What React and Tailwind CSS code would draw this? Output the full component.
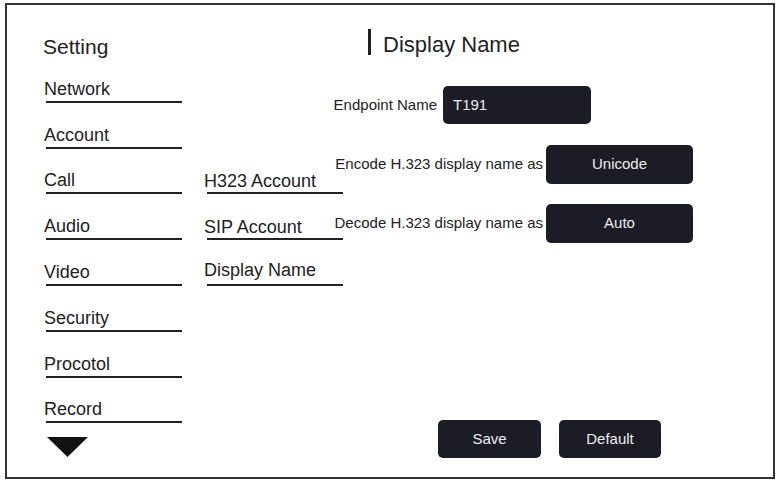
const menu = ['Network', 'Account', 'Call', 'Audio', 'Video', 'Security', 'Procotol', 'Record'];
const subMenu = ['H323 Account', 'SIP Account', 'Display Name'];

function MenuRow({ label }) {
  return (
    <div className="h-[45.8px] w-[136px] shrink-0 flex items-end border-b-2 border-[#222]">
      <span className="text-[18px] leading-[20px] pb-[2px] -ml-[2px] text-[#222]">{label}</span>
    </div>
  );
}

function SubRow({ label, last }) {
  return (
    <div className="h-[45.8px] w-[136px] ml-[3px] shrink-0 flex items-end border-b-2 border-[#222]">
      <span className={`text-[18px] leading-[20px] -ml-[3px] text-[#222] whitespace-nowrap ${last ? 'pb-[4px]' : 'pb-[1px]'}`}>
        {label}
      </span>
    </div>
  );
}

function DarkBox({ children, className = '' }) {
  return (
    <div className={`bg-[#1c1c26] rounded-[5px] text-[#ececec] text-[15px] flex items-center shrink-0 ${className}`}>
      {children}
    </div>
  );
}

export default function App() {
  return (
    <div className="w-[781px] h-[487px] bg-white overflow-hidden font-['Liberation_Sans',Arial,sans-serif]">
      <div className="ml-[5px] mt-[3px] w-[770px] h-[476px] border-2 border-[#333] flex">
        {/* Main menu */}
        <div className="pl-[39px] pt-[30px] w-[175px] shrink-0 flex flex-col">
          <div className="h-[22px] text-[21px] leading-[24px] text-[#222] -ml-[3px]">Setting</div>
          {menu.map((m) => (
            <MenuRow key={m} label={m} />
          ))}
          <svg width="41" height="20" viewBox="0 0 41 20" className="mt-[14px] ml-[1px]">
            <polygon points="0,0 41,0 20.5,20" fill="#111" />
          </svg>
        </div>

        {/* Sub menu */}
        <div className="ml-[22px] pt-[143.6px] w-[126px] shrink-0 flex flex-col">
          {subMenu.map((s, i) => (
            <SubRow key={s} label={s} last={i === subMenu.length - 1} />
          ))}
        </div>

        {/* Content */}
        <div className="flex-1 pt-[24px] flex flex-col text-[#222]">
          <div className="ml-[38px] h-[26px] flex items-center gap-[12px]">
            <div className="w-[3px] h-[26px] bg-[#222]" />
            <span className="text-[22px] leading-[26px] pt-[6px]">Display Name</span>
          </div>

          <div className="mt-[31px] h-[38px] flex items-center">
            <div className="w-[113px] pr-[6px] text-right text-[15px] whitespace-nowrap">Endpoint Name</div>
            <DarkBox className="w-[148px] h-[38px] pl-[10px]">T191</DarkBox>
          </div>

          <div className="mt-[21px] h-[39px] flex items-center">
            <div className="w-[216px] pr-[3px] text-right text-[15px] whitespace-nowrap">Encode H.323 display name as</div>
            <DarkBox className="w-[147px] h-[39px] justify-center">Unicode</DarkBox>
          </div>

          <div className="mt-[20px] h-[39px] flex items-center">
            <div className="w-[216px] pr-[3px] text-right text-[15px] whitespace-nowrap">Decode H.323 display name as</div>
            <DarkBox className="w-[147px] h-[39px] justify-center">Auto</DarkBox>
          </div>

          <div className="mt-[177px] ml-[108px] flex gap-[18px]">
            <DarkBox className="w-[103px] h-[38px] justify-center">Save</DarkBox>
            <DarkBox className="w-[102px] h-[38px] justify-center">Default</DarkBox>
          </div>
        </div>
      </div>
    </div>
  );
}
